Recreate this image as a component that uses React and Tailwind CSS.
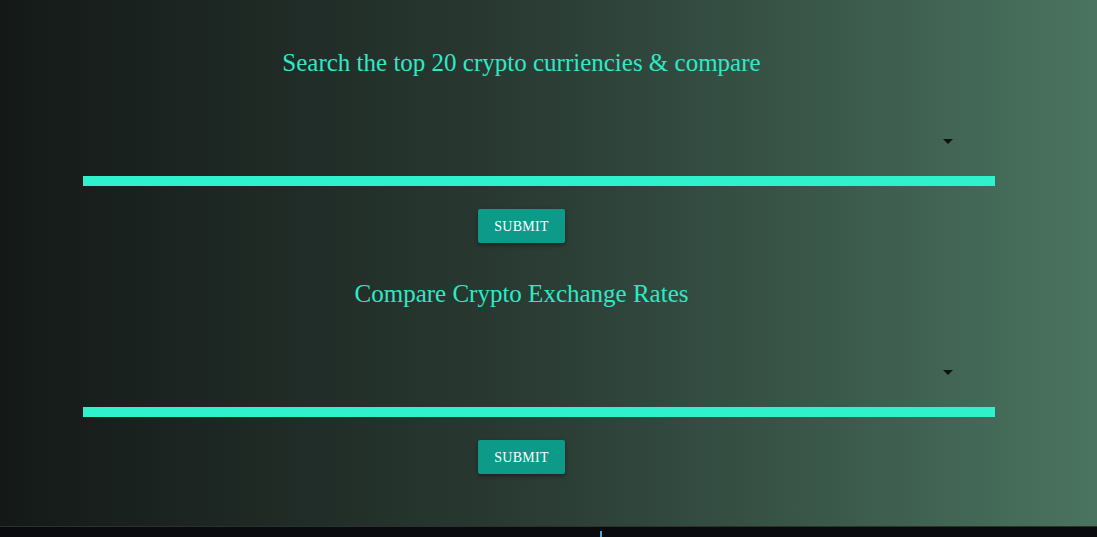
import React from 'react'

function CoinSelect({ title }) {
  return (
    <section className="flex flex-col">
      {/* heading */}
      <h2 className="pr-[35px] pt-[1px] text-center text-[25px] leading-[28px] text-[#2ee9c6] font-['Liberation_Serif',serif]">
        {title}
      </h2>

      {/* select */}
      <div className="flex h-[99px] flex-col">
        <div className="mt-[62px] flex justify-end pr-[42px]">
          <span className="h-0 w-0 border-x-[5px] border-t-[5px] border-x-transparent border-t-[#111]" />
        </div>
        <div className="flex-1" />
      </div>
      <div className="h-[10px] w-full bg-[#2ff2cc]" />

      {/* submit */}
      <div className="mt-[23px] flex justify-center pr-[35px]">
        <button
          type="button"
          className="h-[34px] w-[87px] rounded-[2px] bg-[#0d9a89] text-[14px] tracking-[0.02em] text-white shadow-[0_2px_4px_rgba(0,0,0,0.4)] font-['Liberation_Serif',serif]"
        >
          SUBMIT
        </button>
      </div>
    </section>
  )
}

export default function App() {
  return (
    <div className="flex h-[537px] w-full flex-col overflow-hidden">
      <main className="h-[526px] bg-gradient-to-r from-[#141917] via-[#2b3d35] to-[#4a7460] pt-[48px]">
        <div className="ml-[83px] flex w-[912px] flex-col gap-[36px]">
          <CoinSelect title="Search the top 20 crypto curriencies & compare" />
          <CoinSelect title="Compare Crypto Exchange Rates" />
        </div>
      </main>

      {/* bottom bar */}
      <footer className="relative flex-1 border-t border-[#2c302f] bg-[#0a0b0f]">
        <span className="absolute bottom-0 left-[600px] h-[6px] w-[2px] bg-[#4ca6d6]" />
      </footer>
    </div>
  )
}
